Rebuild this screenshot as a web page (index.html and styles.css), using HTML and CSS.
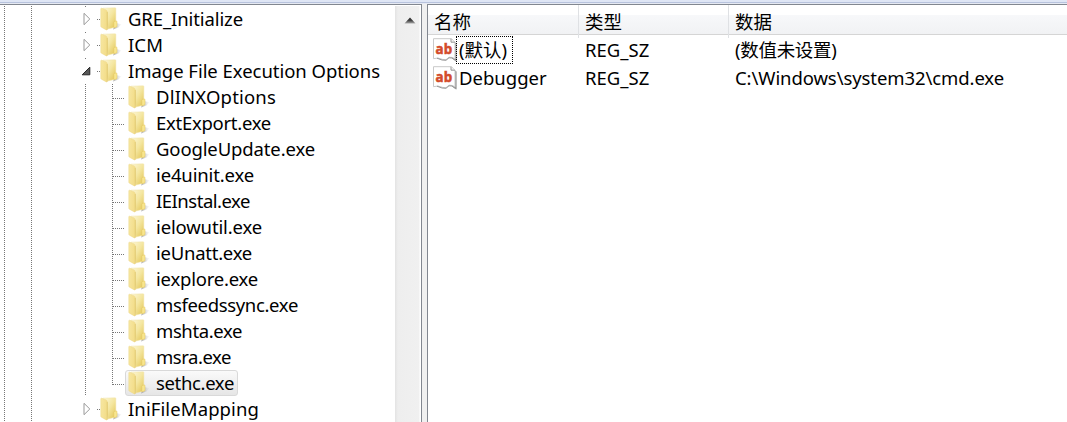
FILE: index.html
```html
<!DOCTYPE html>
<html lang="zh-CN">
<head>
<meta charset="utf-8">
<title>注册表编辑器</title>
<link rel="stylesheet" href="styles.css">
</head>
<body>
<svg width="0" height="0" class="defs">
  <defs>
    <linearGradient id="gBack" x1="0" x2="1" y1="0" y2="1"><stop offset="0" stop-color="#fdf8da"/><stop offset=".5" stop-color="#f4e6a0"/><stop offset="1" stop-color="#e2c350"/></linearGradient>
    <linearGradient id="gFront" x1="0" x2="1" y1="0" y2=".3"><stop offset="0" stop-color="#f7e7a2"/><stop offset="1" stop-color="#f3dd8a"/></linearGradient>
    <linearGradient id="gShade" x1="0" x2="1"><stop offset="0" stop-color="#8f8f8f"/><stop offset="1" stop-color="#ccc" stop-opacity=".1"/></linearGradient>
    <linearGradient id="gArrow" x1="0" x2="0" y1="0" y2="1"><stop offset="0" stop-color="#222"/><stop offset=".5" stop-color="#444"/><stop offset="1" stop-color="#aaa"/></linearGradient>
    <symbol id="folder" viewBox="0 0 22 24">
      <path d="M13 22.5 16 16 21.5 17.2 18.5 20.5Z" fill="url(#gShade)" opacity=".8"/>
      <path d="M3 1.2 15.2.8Q15.8.8 15.8 1.5V20L8 22Z" fill="url(#gBack)" stroke="#f0e2a6" stroke-width=".5"/>
      <path d="M.8 1.8Q.8 1 1.7 1.2L6.3 3Q7.2 3.5 7.2 4.5V22.4Q7.2 23.4 6.3 22.9L1.4 20.2Q.8 19.8.8 19Z" fill="url(#gFront)" stroke="#ecd68a" stroke-width=".5"/>
      <path d="M7.3 5V22.6" stroke="#d9be5c" stroke-width=".6"/>
      <path d="M13.8 15.2Q14 14.3 15 14.2L16.4 14Q17 14 17 14.8V19.8L13.8 20.7Z" fill="#f8e58e" stroke="#e1c55c" stroke-width=".5"/>
    </symbol>
    <symbol id="closed" viewBox="0 0 8 14"><path d="M1 1.3 6.8 7 1 12.7Z" fill="#fff" stroke="#999"/></symbol>
    <symbol id="open" viewBox="0 0 10 10"><path d="M8.8 1.2V8.8H1.2Z" fill="#595959" stroke="#262626"/></symbol>
    <symbol id="string" viewBox="0 0 24 24">
      <path d="M20 3 23.6 5.5V23.5L19 20.5Z" fill="#999"/>
      <path d="M.5.7H18.5L22 4.5V21L19.5 19.5 16 19.2 13 21.7 9.5 21.4 5 20 .5 20.7Z" fill="#fff" stroke="#c9c9c9"/>
      <path d="M4 20.2 9 22 13 22.3 16 19.8 19 20 23 23" fill="none" stroke="#999"/>
      <path d="M18 .8V4.2H22" fill="#eee" stroke="#999"/>
      <text x="2.6" y="15.6" textLength="16.5" lengthAdjust="spacingAndGlyphs" class="ab">ab</text>
    </symbol>
  </defs>
</svg>
<div class="window">
  <div class="tree">
    <div class="rows" id="rows">
    </div>
    <div class="scrollbar"><svg width="12" height="7" viewBox="0 0 12 7"><path d="M6 .5 11.5 6.5H.5Z" fill="url(#gArrow)"/></svg></div>
  </div>
  <div class="list">
    <div class="header"><div class="col name">名称</div><div class="col type">类型</div><div class="col data">数据</div></div>
    <div class="value"><div class="cell name"><svg class="vicon"><use href="#string"/></svg><span class="vname focus">(默认)</span></div><div class="cell type">REG_SZ</div><div class="cell data unset">(数值未设置)</div></div>
    <div class="value"><div class="cell name"><svg class="vicon"><use href="#string"/></svg><span class="vname">Debugger</span></div><div class="cell type">REG_SZ</div><div class="cell data path">C:\Windows\system32\cmd.exe</div></div>
  </div>
</div>
<script src="tree.js"></script>
</body>
</html>
```
FILE: styles.css
```css
body { margin: 0; overflow: hidden; background: #fff; color: #000; font: 18.5px/26px "Noto Sans", "Noto Sans CJK SC", sans-serif; }
.defs { position: absolute; }
.window { display: grid; grid-template-columns: 422px 1fr; column-gap: 5px; height: 422px; box-sizing: border-box; padding-top: 4px; background: linear-gradient(#dfe6f5 0 2px, #b8c3dd 2px 3px, #e6eaf3 3px 4px, #f0f0f0 4px); }
.tree { display: flex; height: 418px; overflow: hidden; background: #fff; box-sizing: border-box; border-top: 1px solid #828790; border-right: 1px solid #828790; }
.rows { flex: 1; padding-top: 1px; }
.row { display: flex; height: 26px; }
.guide { width: 27px; flex: none; display: flex; align-items: center; }
.line { background: repeating-linear-gradient(#777 0 1px, transparent 1px 2px) 4px 0 / 1px 100% no-repeat; }
.tick { background: linear-gradient(#777, #777) 4px 0 / 1px 1px no-repeat; }
.node { width: 20px; box-sizing: border-box; padding-left: 1px; }
.closed { width: 8px; height: 14px; margin-left: 1px; }
.open { width: 10px; height: 10px; margin-left: -1px; }
.stub { flex: none; height: 1px; margin-top: 14px; background: repeating-linear-gradient(90deg, #777 0 1px, transparent 1px 2px); }
.stub.short { width: 3px; margin: 13px -3px 0 -4px; }
.line + .stub { width: 12px; margin-left: -22px; }
.corner { background-size: 1px 15px; }
.item { display: flex; height: 26px; box-sizing: border-box; border: 1px solid transparent; border-radius: 3px; padding-right: 3px; line-height: 24px; }
.item.selected { background: linear-gradient(#fafafa, #e6e6e6); border-color: #d9d9d9; }
.folder { width: 22px; height: 24px; margin: 0 6px 0 2px; flex: none; }
.label { white-space: nowrap; }
.scrollbar { width: 26px; box-sizing: border-box; padding: 11px 0 0 9px; margin-top: 1px; background: linear-gradient(90deg, #e3e3e3, #eee 3px, #f0f0f0 24px, #fff 25px); }
.scrollbar svg { display: block; }
.list { background: #fff; box-sizing: border-box; border-top: 1px solid #828790; border-left: 1px solid #828790; }
.header { display: grid; grid-template-columns: 151px 150px 1fr; height: 30px; box-sizing: border-box; border-bottom: 1px solid #d5d5d5; background: linear-gradient(#fff 10px, #f7f8fa 10px, #f1f2f4); line-height: 33px; margin-bottom: 2px; }
.col { padding-left: 6px; border-right: 1px solid #dfe1e4; }
.col.data { border-right: 0; }
.value { display: grid; grid-template-columns: 151px 150px 1fr; height: 28px; }
.cell { padding-left: 6px; white-space: nowrap; }
.cell.name { display: flex; padding-left: 5px; }
.unset { letter-spacing: -.3px; }
.path { letter-spacing: -.09px; }
.vicon { width: 24px; height: 24px; margin-top: 1px; flex: none; }
.vname { height: 26px; box-sizing: border-box; padding: 0 4px 0 2px; }
.focus { outline: 1px dotted #000; padding-right: 5px; }
.ab { font: bold 15px "Open Sans", sans-serif; fill: #d34b2b; stroke: #d34b2b; stroke-width: .6px; }
```
FILE: tree.js
```js
const rows = [
  ["GRE_Initialize", "closed", 115], ["ICM", "closed", 35], ["Image File Execution Options", "open", 252],
  ["DlINXOptions", "", 120], ["ExtExport.exe", "", 115], ["GoogleUpdate.exe", "", 159], ["ie4uinit.exe", "", 98],
  ["IEInstal.exe", "", 94], ["ielowutil.exe", "", 106], ["ieUnatt.exe", "", 96], ["iexplore.exe", "", 102],
  ["msfeedssync.exe", "", 142], ["mshta.exe", "", 86], ["msra.exe", "", 75], ["sethc.exe", "", 78],
  ["IniFileMapping", "closed", 131]
];

function rowHtml([name, state, width], index) {
  const guides = '<div class="guide line"></div><div class="guide line"></div><div class="guide"></div>';
  const last = index === rows.length - 2;
  const branch = state
    ? `<div class="guide node ${index < 3 ? "tick" : ""}"><svg class="${state}"><use href="#${state}"/></svg></div><div class="stub short"></div>`
    : `<div class="guide line"></div><div class="guide line child ${last ? "corner" : ""}"></div><div class="stub"></div>`;
  return `<div class="row ${state ? "top" : "leaf"}">${guides}${branch}<div class="item ${last ? "selected" : ""}"><svg class="folder"><use href="#folder"/></svg><span class="label" data-width="${width}">${name}</span></div></div>`;
}

document.getElementById("rows").innerHTML = rows.map(rowHtml).join("");

function fit(el, width) {
  const natural = el.getBoundingClientRect().width;
  el.style.letterSpacing = (width - natural) / el.textContent.length + "px";
}
document.querySelectorAll(".label").forEach(el => fit(el, +el.dataset.width));
```
